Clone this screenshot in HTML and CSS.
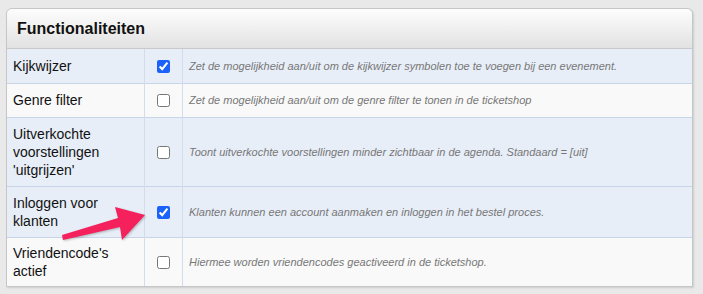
FILE: index.html
```html
<!DOCTYPE html>
<html lang="nl">
<head>
    <meta charset="UTF-8">
    <title>Functionaliteiten</title>
    <link rel="stylesheet" href="styles.css">
</head>
<body>

<div class="paneel">
    <div class="paneel-kop">
        <h2>Functionaliteiten</h2>
    </div>
    <table class="instellingen">
        <tr class="blauw">
            <td class="naam">Kijkwijzer</td>
            <td class="vink"><input type="checkbox" checked></td>
            <td class="uitleg">Zet de mogelijkheid aan/uit om de kijkwijzer symbolen toe te voegen bij een evenement.</td>
        </tr>
        <tr>
            <td class="naam">Genre filter</td>
            <td class="vink"><input type="checkbox"></td>
            <td class="uitleg">Zet de mogelijkheid aan/uit om de genre filter te tonen in de ticketshop</td>
        </tr>
        <tr class="blauw">
            <td class="naam">Uitverkochte voorstellingen 'uitgrijzen'</td>
            <td class="vink"><input type="checkbox"></td>
            <td class="uitleg">Toont uitverkochte voorstellingen minder zichtbaar in de agenda. Standaard = [uit]</td>
        </tr>
        <tr class="blauw">
            <td class="naam">Inloggen voor klanten</td>
            <td class="vink"><input type="checkbox" checked></td>
            <td class="uitleg">Klanten kunnen een account aanmaken en inloggen in het bestel proces.</td>
        </tr>
        <tr>
            <td class="naam">Vriendencode's actief</td>
            <td class="vink"><input type="checkbox"></td>
            <td class="uitleg">Hiermee worden vriendencodes geactiveerd in de ticketshop.</td>
        </tr>
    </table>

    <!-- pijl die naar het vinkje wijst -->
    <svg class="pijl" width="100" height="45" viewBox="55 200 100 45">
        <polygon points="62,234 118,217 115,206 145,214 122,239 120,226 63,239" fill="#f4215d"/>
    </svg>
</div>

</body>
</html>
```

FILE: styles.css
```css
/* Algemeen */
body {
    margin: 0;
    padding: 8px 10px 9px 6px;
    background-color: #e9e9e9;
    font-family: "Liberation Sans", Arial, Helvetica, sans-serif;
    color: #111;
}

.paneel {
    position: relative;
    width: 685px;
    background-color: #f9f9f9;
    border: 1px solid #c6c6c6;
    border-radius: 6px 6px 0 0;
    box-shadow: 1px 1px 2px rgba(0, 0, 0, 0.12);
}

.paneel-kop {
    height: 39px;
    display: flex;
    align-items: center;
    padding-left: 10px;
    background: linear-gradient(#fdfdfd, #e2e2e2);
    border-bottom: 1px solid #c9c9c9;
    border-radius: 6px 6px 0 0;
}

.paneel-kop h2 {
    margin: 0;
    font-size: 16px;
    font-weight: bold;
    color: #111;
}

.instellingen {
    width: 100%;
    border-collapse: collapse;
}

.instellingen tr {
    height: 34px;
    background-color: #f9f9f9;
    border-top: 1px solid #c8d5e9;
}

.instellingen tr:first-child {
    border-top: none;
}

.instellingen tr.blauw {
    background-color: #e7eef7;
}

.instellingen td {
    padding: 7px 6px;
    vertical-align: middle;
}

.instellingen tr:last-child td {
    padding-top: 6px;
    padding-bottom: 6px;
}

.naam {
    width: 125px;
    font-size: 14px;
    line-height: 18px;
}

.vink {
    width: 25px;
    text-align: center;
    border-left: 1px solid #d3dcea;
    border-right: 1px solid #d3dcea;
}

.vink input {
    margin: 0;
    width: 13px;
    height: 13px;
    vertical-align: middle;
    accent-color: #1a62fb;
}

.uitleg {
    font-size: 11px;
    font-style: italic;
    color: #777;
}

.pijl {
    position: absolute;
    left: 48px;
    top: 192px;
    filter: drop-shadow(1px 1px 1px rgba(0, 0, 0, 0.25));
}
```
